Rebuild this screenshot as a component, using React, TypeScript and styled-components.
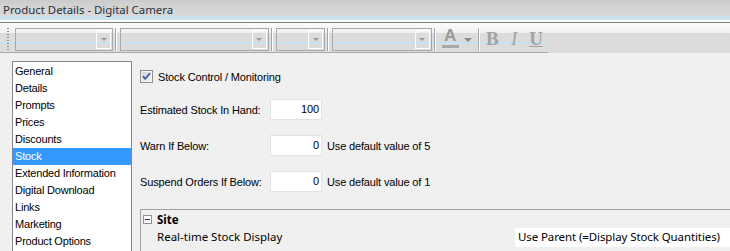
import React from 'react';
import styled, { createGlobalStyle } from 'styled-components';

const GlobalStyle = createGlobalStyle`
  html, body {
    margin: 0;
    padding: 0;
    background: #f0f0f0;
  }
  body {
    width: 730px;
    height: 251px;
    overflow: hidden;
  }
`;

const sections = [
  'General',
  'Details',
  'Prompts',
  'Prices',
  'Discounts',
  'Stock',
  'Extended Information',
  'Digital Download',
  'Links',
  'Marketing',
  'Product Options',
];

const Window = styled.div`
  width: 730px;
  height: 251px;
  display: flex;
  flex-direction: column;
  overflow: hidden;
  background: #f0f0f0;
`;

const TitleBar = styled.div`
  flex: none;
  height: 22px;
  border-bottom: 1px solid #7f7f7f;
  padding-left: 3px;
  background: linear-gradient(
    to bottom,
    #cbcbcb 0px,
    #d3d3d3 6px,
    #d9d9d9 16px,
    #cce4f2 17px,
    #cce4f2 20px,
    #fafafa 20px,
    #fafafa 22px
  );
  font-family: 'Noto Sans', sans-serif;
  font-size: 11.4px;
  line-height: 20px;
  color: #26303d;
`;

const ToolStrip = styled.div`
  flex: none;
  height: 30px;
  background: linear-gradient(to bottom, #fbfbfb 0px, #f1f1f1 10px, #dcdcdc 10px, #dcdcdc 30px);
`;

const Toolbar = styled.div`
  width: 548px;
  height: 30px;
  box-sizing: border-box;
  display: flex;
  align-items: flex-start;
  padding: 5px 0 0 7px;
  border-bottom: 1px solid #a8a8a8;
  background: linear-gradient(
    to bottom,
    transparent 19px,
    #c6e3f3 19px,
    #c6e3f3 21px,
    transparent 21px
  );
`;

const Grip = styled.div`
  width: 2px;
  height: 24px;
  margin-right: 6px;
  background: repeating-linear-gradient(to bottom, #8c8c8c 0px, #8c8c8c 1px, transparent 1px, transparent 3px);
`;

const Combo = styled.div<{ $w: number }>`
  width: ${(p) => p.$w}px;
  height: 23px;
  box-sizing: border-box;
  border: 1px solid #a9a9a9;
  display: flex;
  justify-content: flex-end;
  padding: 1px;
`;

const DropButton = styled.div`
  width: 15px;
  box-shadow: inset 0 0 0 1px #ffffff;
  display: flex;
  align-items: center;
  justify-content: center;
  &::after {
    content: '';
    border-left: 3px solid transparent;
    border-right: 3px solid transparent;
    border-top: 3px solid #9a9a9a;
  }
`;

const Sep = styled.div`
  width: 1px;
  height: 23px;
  margin: 0 3px 0 2px;
  background: #a7a7a7;
  border-right: 1px solid #ffffff;
`;

const ColorA = styled.div`
  display: flex;
  align-items: flex-start;
  margin: 0 4px 0 3px;
  height: 23px;
`;

const ALetter = styled.span`
  width: 17px;
  display: flex;
  flex-direction: column;
  align-items: center;
  font-family: 'Liberation Sans', sans-serif;
  font-weight: bold;
  font-size: 17px;
  line-height: 16px;
  color: #9a9a9a;
  &::after {
    content: '';
    width: 17px;
    height: 3px;
    margin-top: 1px;
    background: #a8a8a8;
  }
`;

const SmallArrow = styled.span`
  margin: 10px 0 0 5px;
  border-left: 4px solid transparent;
  border-right: 4px solid transparent;
  border-top: 4px solid #8a8a8a;
`;

const FormatButton = styled.span<{ $italic?: boolean; $underline?: boolean }>`
  width: 20px;
  margin-right: 2px;
  text-align: center;
  font-family: 'Liberation Serif', serif;
  font-weight: ${(p) => (p.$italic ? 'normal' : 'bold')};
  font-style: ${(p) => (p.$italic ? 'italic' : 'normal')};
  text-decoration: ${(p) => (p.$underline ? 'underline' : 'none')};
  font-size: 19px;
  line-height: 22px;
  color: #a3a3a3;
`;

const Body = styled.div`
  flex: 1;
  display: flex;
  padding: 8px 0 0 12px;
  min-height: 0;
`;

const ListBox = styled.ul`
  flex: none;
  width: 120px;
  box-sizing: border-box;
  margin: 0;
  padding: 1px 0 0;
  list-style: none;
  background: #ffffff;
  border: 1px solid #828790;
  border-bottom: none;
  font-family: 'Liberation Sans', sans-serif;
  font-size: 11px;
  letter-spacing: -0.2px;
`;

const ListItem = styled.li<{ $selected?: boolean }>`
  height: 17px;
  line-height: 17px;
  padding-left: 2px;
  white-space: nowrap;
  color: ${(p) => (p.$selected ? '#ffffff' : '#000000')};
  background: ${(p) => (p.$selected ? '#3399ff' : 'transparent')};
`;

const Panel = styled.div`
  flex: 1;
  margin-left: 8px;
  display: flex;
  flex-direction: column;
  font-family: 'Liberation Sans', sans-serif;
  font-size: 11px;
  letter-spacing: -0.15px;
  color: #000000;
`;

const CheckRow = styled.label`
  display: flex;
  align-items: center;
  gap: 5px;
  height: 13px;
  margin-top: 9px;
  margin-bottom: 16px;
`;

const FieldRow = styled.div`
  display: flex;
  align-items: center;
  height: 21px;
  margin-bottom: 15px;
`;

const FieldLabel = styled.span`
  width: 130px;
`;

const NumberBox = styled.div`
  width: 52px;
  height: 21px;
  box-sizing: border-box;
  border: 1px solid #e2e2e2;
  background: #ffffff;
  text-align: right;
  padding-right: 2px;
  line-height: 19px;
`;

const Hint = styled.span`
  margin-left: 5px;
`;

const PropGrid = styled.div`
  flex: 1;
  margin-top: 2px;
  border-top: 1px solid #a0a0a0;
  border-left: 1px solid #a0a0a0;
  font-family: 'Noto Sans', sans-serif;
  font-size: 11.5px;
  letter-spacing: 0;
  color: #000000;
`;

const CategoryRow = styled.div`
  display: flex;
  align-items: center;
  height: 18px;
  padding-left: 2px;
  font-weight: bold;
`;

const Expander = styled.span`
  width: 9px;
  height: 9px;
  box-sizing: border-box;
  border: 1px solid #929292;
  background: #ffffff;
  margin-right: 5px;
  display: flex;
  align-items: center;
  justify-content: center;
  &::after {
    content: '';
    width: 5px;
    height: 1px;
    background: #2d2d2d;
  }
`;

const PropRow = styled.div`
  display: flex;
  height: 19px;
  line-height: 18px;
`;

const PropName = styled.span`
  width: 358px;
  padding-left: 16px;
`;

const PropValue = styled.span`
  flex: 1;
  background: #ffffff;
  padding-left: 3px;
  white-space: nowrap;
  letter-spacing: -0.1px;
`;

function CheckIcon() {
  return (
    <svg width="13" height="13" viewBox="0 0 13 13">
      <defs>
        <linearGradient id="cbfill" x1="0" y1="0" x2="1" y2="1">
          <stop offset="0" stopColor="#cfd2d6" />
          <stop offset="1" stopColor="#f4f4f4" />
        </linearGradient>
      </defs>
      <rect x="0.5" y="0.5" width="12" height="12" fill="#f4f4f4" stroke="#8e8f8f" />
      <rect x="2" y="2" width="9" height="9" fill="url(#cbfill)" />
      <path d="M3 6.4 L5.2 8.8 L10 3.2" fill="none" stroke="#2f54a0" strokeWidth="1.7" />
    </svg>
  );
}

export default function App() {
  return (
    <>
      <GlobalStyle />
      <Window>
        <TitleBar>Product Details - Digital Camera</TitleBar>
        <ToolStrip>
          <Toolbar>
            <Grip />
            <Combo $w={99}>
              <DropButton />
            </Combo>
            <Sep />
            <Combo $w={150}>
              <DropButton />
            </Combo>
            <Sep />
            <Combo $w={50}>
              <DropButton />
            </Combo>
            <Sep />
            <Combo $w={100}>
              <DropButton />
            </Combo>
            <Sep />
            <ColorA>
              <ALetter>A</ALetter>
              <SmallArrow />
            </ColorA>
            <Sep />
            <FormatButton>B</FormatButton>
            <FormatButton $italic>I</FormatButton>
            <FormatButton $underline>U</FormatButton>
          </Toolbar>
        </ToolStrip>
        <Body>
          <ListBox>
            {sections.map((s) => (
              <ListItem key={s} $selected={s === 'Stock'}>
                {s}
              </ListItem>
            ))}
          </ListBox>
          <Panel>
            <CheckRow>
              <CheckIcon />
              Stock Control / Monitoring
            </CheckRow>
            <FieldRow>
              <FieldLabel>Estimated Stock In Hand:</FieldLabel>
              <NumberBox>100</NumberBox>
            </FieldRow>
            <FieldRow>
              <FieldLabel>Warn If Below:</FieldLabel>
              <NumberBox>0</NumberBox>
              <Hint>Use default value of 5</Hint>
            </FieldRow>
            <FieldRow>
              <FieldLabel>Suspend Orders If Below:</FieldLabel>
              <NumberBox>0</NumberBox>
              <Hint>Use default value of 1</Hint>
            </FieldRow>
            <PropGrid>
              <CategoryRow>
                <Expander />
                Site
              </CategoryRow>
              <PropRow>
                <PropName>Real-time Stock Display</PropName>
                <PropValue>Use Parent (=Display Stock Quantities)</PropValue>
              </PropRow>
            </PropGrid>
          </Panel>
        </Body>
      </Window>
    </>
  );
}
